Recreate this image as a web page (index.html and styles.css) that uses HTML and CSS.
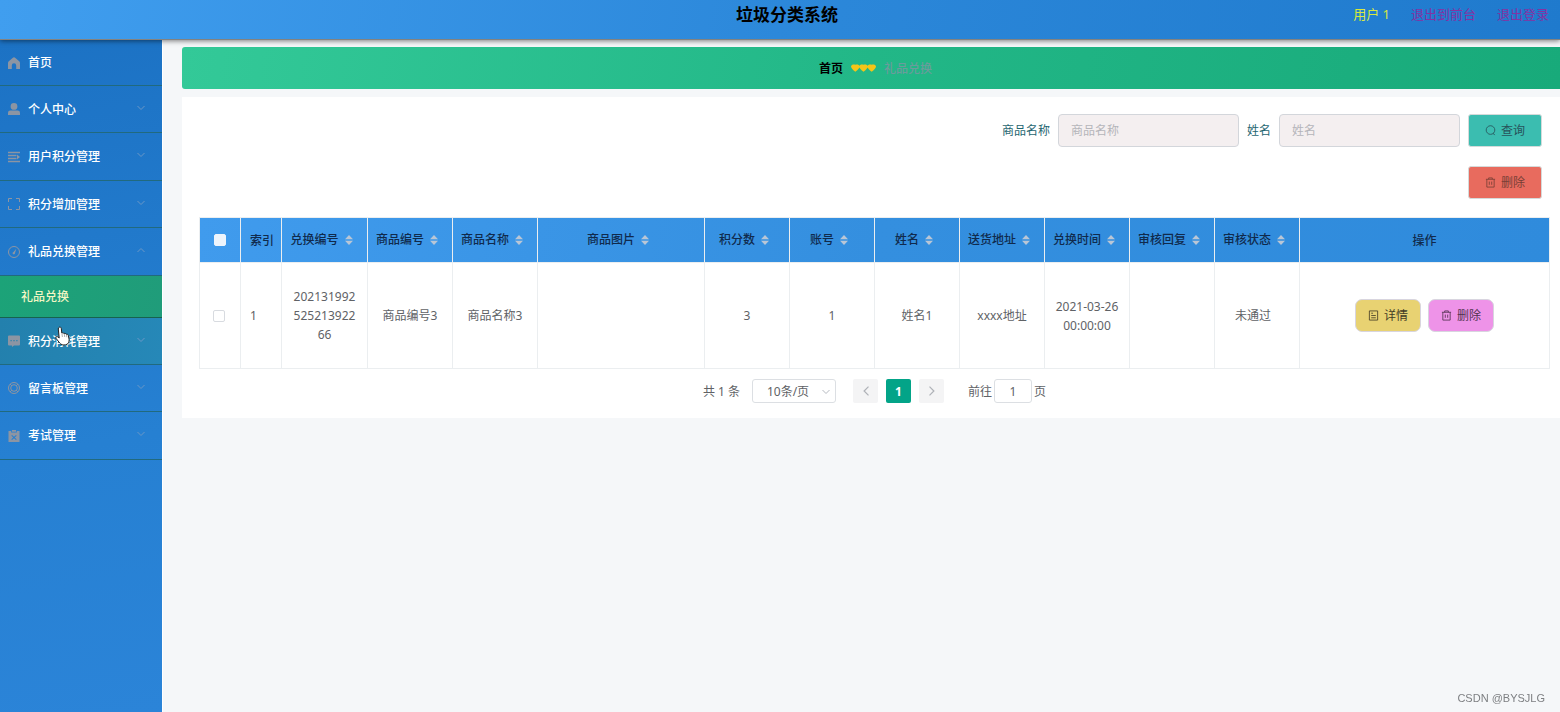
FILE: index.html
```html
<!DOCTYPE html>
<html lang="zh-CN">
<head>
<meta charset="utf-8">
<title>垃圾分类系统</title>
<link rel="stylesheet" href="styles.css">
</head>
<body>
<svg class="defs" aria-hidden="true">
  <symbol id="down" viewBox="0 0 8 8"><path d="M.5 2 4 5.500 7.500 2" fill="none" stroke="currentColor"/></symbol>
  <symbol id="sort" viewBox="0 0 8 10"><path d="M4 0 8 4.300H0zM4 10 0 5.700h8z" fill="currentColor"/></symbol>
  <symbol id="trash" viewBox="0 0 12 12"><path d="M1 2.500h10M4 2.500v-1.500h4v1.500M2 2.500v8.500h8V2.500M4.700 5v3.500M7.300 5v3.500" fill="none" stroke="currentColor" stroke-width=".9"/></symbol>
</svg>
<header class="topbar">
  <h1 class="title">垃圾分类系统</h1>
  <div class="user">
    <span class="user-name">用户 1</span>
    <a class="user-link" href="#front">退出到前台</a>
    <a class="user-link" href="#logout">退出登录</a>
  </div>
</header>
<div class="layout">
  <nav class="sidebar">
    <a class="item home" href="#home">
      <svg class="icon" viewBox="0 0 12 12"><path d="M6 .3Q5.300.3 4.600 1L.8 4.300Q0 5 0 6v6h3.800V8.500a2.200 2.200 0 0 1 4.400 0V12H12V6q0-1-.8-1.700L7.400 1Q6.700.3 6 .3z" fill="currentColor"/></svg><span>首页</span></a>
    <a class="item" href="#me">
      <svg class="icon" viewBox="0 0 12 12"><path d="M6 0a3.300 3.300 0 1 1 0 6.800A3.300 3.300 0 0 1 6 0zM0 12V9.800Q0 7.500 2.400 7.500h7.200Q12 7.500 12 9.800V12z" fill="currentColor"/></svg><span>个人中心</span><svg class="arrow"><use href="#down"/></svg></a>
    <a class="item" href="#points">
      <svg class="icon" viewBox="0 0 12 12"><path d="M0 1.500h12M0 4.500h8.500M0 7.500h8.500M0 10.500h12" stroke="currentColor" stroke-width="1.300"/><path d="M9 3.500 12 6 9 8.500z" fill="currentColor"/></svg><span>用户积分管理</span><svg class="arrow"><use href="#down"/></svg></a>
    <a class="item" href="#add">
      <svg class="icon" viewBox="0 0 12 12"><path d="M.5 4V.5H4M8 .5h3.500V4M11.500 8v3.500H8M4 11.500H.5V8" fill="none" stroke="currentColor"/></svg><span>积分增加管理</span><svg class="arrow"><use href="#down"/></svg></a>
    <a class="item" href="#gifts">
      <svg class="icon" viewBox="0 0 12 12"><circle cx="6" cy="6" r="5.500" fill="none" stroke="currentColor"/><path d="M8.300 2.800 7 7a1.200 1.200 0 1 1-1.500-1z" fill="currentColor"/></svg><span>礼品兑换管理</span><svg class="arrow up"><use href="#down"/></svg></a>
    <a class="subitem" href="#exchange">礼品兑换</a>
    <a class="item hovered" href="#spend">
      <svg class="icon" viewBox="0 0 12 12"><path d="M1 .5h10q1 0 1 1v8q0 1-1 1H6L4 12v-1.500H1q-1 0-1-1v-8q0-1 1-1zM2.500 5v1.200h1.200V5zm2.900 0v1.200h1.200V5zm2.900 0v1.200h1.200V5z" fill="currentColor" fill-rule="evenodd"/></svg><span>积分消耗管理</span><svg class="arrow"><use href="#down"/></svg></a>
    <a class="item" href="#board">
      <svg class="icon" viewBox="0 0 12 12" fill="none" stroke="currentColor"><circle cx="6" cy="6" r="5.500"/><circle cx="6" cy="6" r="3.300"/><path d="m2 2 1.800 1.800M10 2 8.200 3.800M2 10l1.800-1.800M10 10 8.200 8.200"/></svg><span>留言板管理</span><svg class="arrow"><use href="#down"/></svg></a>
    <a class="item" href="#exam">
      <svg class="icon" viewBox="0 0 12 12"><path d="M.5 1h2.700v1.500h5.600V1h2.700v11H.5zM4 0h4v1.700H4zM4 5l-.7.7L5.300 7.500l-2 1.800.7.700 2-1.800L8 10l.7-.7-2-1.800 2-1.800L8 5 6 6.800z" fill="currentColor" fill-rule="evenodd"/></svg><span>考试管理</span><svg class="arrow"><use href="#down"/></svg></a>
  </nav>
  <main class="main">
    <div class="crumbs">
      <a class="crumb-home" href="#home">首页</a>
      <svg class="hearts" viewBox="0 0 26 8"><path d="M4.500 8Q0 4.500 0 2.500C0 .3 3 0 4.500.5 6 0 9 .3 9 2.500Q9 4.500 4.500 8zM13 8Q8.500 4.500 8.500 2.500c0-2.200 3-2.500 4.500-2 1.500-.5 4.500-.2 4.500 2Q17.500 4.500 13 8zM21.500 8Q17 4.500 17 2.500c0-2.200 3-2.500 4.500-2 1.500-.5 4.500-.2 4.500 2Q26 4.500 21.500 8z" fill="#f5c518"/></svg>
      <span class="crumb-now">礼品兑换</span>
    </div>
    <section class="panel">
      <form class="search">
        <label for="goods">商品名称</label>
        <input class="field" id="goods" type="text" placeholder="商品名称">
        <label for="name">姓名</label>
        <input class="field" id="name" type="text" placeholder="姓名">
        <button class="btn query" type="button"><svg class="btn-icon" viewBox="0 0 12 12"><circle cx="6" cy="5.500" r="4.700" fill="none" stroke="currentColor" stroke-width=".9"/><path d="m9 9 1.500 2" stroke="currentColor"/></svg>查询</button>
      </form>
      <div class="tools">
        <button class="btn remove" type="button"><svg class="btn-icon"><use href="#trash"/></svg>删除</button>
      </div>
      <table class="grid">
        <colgroup><col class="c-check"><col class="c-index"><col class="c-code"><col class="c-std"><col class="c-std"><col class="c-photo"><col class="c-std"><col class="c-std"><col class="c-std"><col class="c-std"><col class="c-std"><col class="c-std"><col class="c-std"><col class="c-ops"></colgroup>
        <thead>
          <tr>
            <th><input class="check" type="checkbox" aria-label="全选"></th>
            <th class="left">索引</th>
            <th class="sortable">兑换编号<svg class="sort"><use href="#sort"/></svg></th>
            <th class="sortable">商品编号<svg class="sort"><use href="#sort"/></svg></th>
            <th class="sortable">商品名称<svg class="sort"><use href="#sort"/></svg></th>
            <th class="sortable">商品图片<svg class="sort"><use href="#sort"/></svg></th>
            <th class="sortable">积分数<svg class="sort"><use href="#sort"/></svg></th>
            <th class="sortable">账号<svg class="sort"><use href="#sort"/></svg></th>
            <th class="sortable">姓名<svg class="sort"><use href="#sort"/></svg></th>
            <th class="sortable">送货地址<svg class="sort"><use href="#sort"/></svg></th>
            <th class="sortable">兑换时间<svg class="sort"><use href="#sort"/></svg></th>
            <th class="sortable">审核回复<svg class="sort"><use href="#sort"/></svg></th>
            <th class="sortable">审核状态<svg class="sort"><use href="#sort"/></svg></th>
            <th>操作</th>
          </tr>
        </thead>
        <tbody>
          <tr>
            <td class="pick"><input class="check" type="checkbox" aria-label="选择第1行"></td>
            <td class="left">1</td>
            <td>20213199252521392266</td>
            <td>商品编号3</td>
            <td>商品名称3</td>
            <td></td>
            <td>3</td>
            <td>1</td>
            <td>姓名1</td>
            <td>xxxx地址</td>
            <td>2021-03-26 00:00:00</td>
            <td></td>
            <td class="status">未通过</td>
            <td>
              <div class="ops">
                <button class="btn small detail" type="button"><svg class="btn-icon" viewBox="0 0 12 12"><path d="M1.500 1h9v10h-9zM3.500 3.500h2M3.500 6h5M3.500 8.500h5" fill="none" stroke="currentColor" stroke-width=".9"/></svg>详情</button>
                <button class="btn small drop" type="button"><svg class="btn-icon"><use href="#trash"/></svg>删除</button>
              </div>
            </td>
          </tr>
        </tbody>
      </table>
      <div class="pager">
        <span>共 1 条</span>
        <span class="size"><select class="size-select" aria-label="每页条数"><option>10条/页</option></select><svg class="size-arrow"><use href="#down"/></svg></span>
        <div class="pages">
          <button class="page" type="button" aria-label="上一页" disabled><svg class="arrow-h prev"><use href="#down"/></svg></button>
          <button class="page current" type="button">1</button>
          <button class="page" type="button" aria-label="下一页" disabled><svg class="arrow-h next"><use href="#down"/></svg></button>
        </div>
        <label class="jump">前往<input class="jump-input" type="text" value="1">页</label>
      </div>
    </section>
  </main>
</div>
<svg class="pointer" viewBox="0 0 16 20" aria-hidden="true"><path d="M4.200 1.300c1-.6 2 .1 2.100 1.200l.5 4.600c.8-.5 1.800-.2 2.200.5.900-.5 1.900-.1 2.200.7 1-.4 2 .2 2.200 1.300l.7 3.700c.3 2.500-.8 5-3.500 5.500-2.500.5-4.600-.1-5.900-1.800L1 12.300c-.6-1.200.7-2.200 1.800-1.500l1.400 1.200L3.300 3c-.1-.8.2-1.400.9-1.700z" fill="#fff" stroke="#222"/><path d="m7 8 .4 3M9.300 8l.4 3M11.500 8.700l.3 2.500" stroke="#777" stroke-width=".6"/></svg>
<div class="watermark">CSDN @BYSJLG</div>
</body>
</html>
```
FILE: styles.css
```css
* { box-sizing: border-box; }

body {
  margin: 0;
  min-height: 100vh;
  display: flex;
  flex-direction: column;
  overflow-x: hidden;
  background: #f5f7f9;
  color: #606266;
  font: 12px/19px "Noto Sans", "Noto Sans CJK SC", sans-serif;
}

a { text-decoration: none; }
button, input, select { font: inherit; }
.defs { display: none; }

.topbar {
  position: relative;
  z-index: 2;
  display: grid;
  grid-template-columns: 1fr auto 1fr;
  height: 40px;
  padding: 0 11px 10px 25px;
  align-items: center;
  background: linear-gradient(100deg, #409eef, #2c88da 50%, #1f7acd);
  border-bottom: 1px solid #84827f;
  box-shadow: 0 1px 5px rgba(0, 0, 0, .5);
}
.title {
  grid-column: 2;
  margin: 0;
  color: #000;
  font-size: 17px;
  line-height: 24px;
}
.user {
  display: flex;
  justify-content: flex-end;
  gap: 21px;
  font-size: 13px;
}
.user-name { color: #d9e83f; }
.user-link { color: #8432a3; }

.layout { flex: 1; display: flex; }

.sidebar {
  flex: none;
  width: 162px;
  background: linear-gradient(170deg, #1c72c4, #2680d2 60%, #2b84d8);
}
.item {
  display: flex;
  align-items: center;
  gap: 8px;
  height: 48px;
  padding: 0 17px 0 8px;
  border-bottom: 1px solid #216a7e;
  color: #fff;
  font-weight: 500;
}
.item:nth-child(even) { height: 47px; }
.item.home { height: 46px; }
.icon { width: 12px; height: 12px; color: #8c95a3; }
.arrow {
  width: 8px;
  height: 8px;
  margin: 0 0 3px auto;
  color: #6a97c6;
}
.arrow.up { transform: rotate(180deg); }
.item.hovered { background: linear-gradient(100deg, #2380ad, #2688b8); height: 47px; }
.subitem {
  display: flex;
  align-items: center;
  height: 42px;
  padding-left: 21px;
  border-bottom: 1px solid #17624f;
  background: linear-gradient(100deg, #1ca378, #209c7a);
  color: #f3f6c4;
  font-weight: 500;
}

.main {
  flex: 1;
  min-width: 0;
  padding: 7px 0 0 19px;
  border-left: 1px solid #fff;
}
.crumbs {
  display: flex;
  justify-content: center;
  align-items: center;
  gap: 8px;
  height: 42px;
  padding-left: 9px;
  border-radius: 3px 0 0 3px;
  background: linear-gradient(100deg, #33c998, #22b787 50%, #18aa7a);
}
.crumb-home { color: #000; font-weight: 700; }
.crumb-now { color: #6a9c9c; font-weight: 500; }
.hearts { width: 25px; height: 8px; }

.panel {
  margin-top: 8px;
  padding: 17px 10px 15px 17px;
  background: #fff;
}
.search, .tools {
  display: flex;
  justify-content: flex-end;
  align-items: center;
  gap: 9px;
  padding-right: 8px;
  color: #1f6671;
}
.search { gap: 8px; }
.tools { margin: 19px 0 18px; }
.field {
  width: 181px;
  height: 33px;
  padding: 0 12px;
  border: 1px solid #d3d6db;
  border-radius: 4px;
  background: #f4eff0;
  color: #606266;
}
.field::placeholder { color: #b5b5ba; }

.btn {
  display: flex;
  align-items: center;
  justify-content: center;
  gap: 5px;
  width: 74px;
  height: 33px;
  padding: 0;
  border: 1px solid #d5dada;
  border-radius: 3px;
}
.btn-icon { width: 11px; height: 11px; }
.query { background: #3bbdb0; color: #28525a; }
.remove { background: #e86b5e; color: #783f36; }
.small { width: 66px; border-radius: 7px; border-color: #d8d5df; }
.detail { background: #e8d272; color: #443d26; }
.drop { background: #ee93e8; color: #51334f; }
.ops { display: flex; justify-content: center; gap: 7px; }

.grid {
  width: 100%;
  table-layout: fixed;
  border-collapse: collapse;
  border: 1px solid #ebeef0;
}
.c-check, .c-index { width: 41px; }
.c-code { width: 86px; }
.c-std { width: 85px; }
.c-photo { width: 167px; }
.grid thead { background: linear-gradient(100deg, #409bed, #348fdf 50%, #2f8bdc); }
.grid th, .grid td {
  padding: 0 9px;
  border: 1px solid #ebeef0;
  text-align: center;
  overflow-wrap: anywhere;
}
.grid th {
  height: 45px;
  padding: 0;
  color: #102a4c;
  font-weight: 500;
  white-space: nowrap;
}
.grid .sortable { padding: 0 6px 2px 0; }
.grid td { height: 106px; }
.grid .pick { padding: 0 11px 0 8px; }
.grid .status { padding-right: 17px; }
.grid .left { padding-left: 9px; text-align: left; }
.sort {
  width: 8px;
  height: 10px;
  margin-left: 6px;
  vertical-align: -1px;
  color: #b9c6d6;
}
.check {
  appearance: none;
  display: block;
  width: 12px;
  height: 12px;
  margin: 0 auto;
  border: 1px solid #d8dbe0;
  border-radius: 2px;
  background: #fff;
}
th .check { background: #edf4fc; border-color: #edf4fc; }

.pager {
  display: flex;
  justify-content: center;
  align-items: center;
  margin-top: 10px;
  gap: 12px;
}
.size { position: relative; display: flex; }
.size-select {
  appearance: none;
  width: 84px;
  height: 24px;
  padding: 0 12px 0 0;
  border: 1px solid #dcdfe3;
  border-radius: 3px;
  background: #fff;
  color: #606266;
  text-align: center;
  text-align-last: center;
}
.size-arrow {
  position: absolute;
  right: 6px;
  top: 9px;
  width: 8px;
  height: 8px;
  color: #b5b9c0;
}
.pages { display: flex; gap: 8px; margin: 0 12px 0 5px; }
.page {
  display: flex;
  align-items: center;
  justify-content: center;
  width: 25px;
  height: 24px;
  padding: 0;
  border: 0;
  border-radius: 2px;
  background: #f4f4f5;
  color: #b0b3b9;
}
.page.current { background: #03a488; color: #fff; font-weight: 700; }
.arrow-h { width: 10px; height: 10px; }
.prev { transform: rotate(90deg); }
.next { transform: rotate(-90deg); }
.jump { display: flex; align-items: center; gap: 2px; }
.jump-input {
  width: 38px;
  height: 24px;
  padding: 0;
  border: 1px solid #dcdfe3;
  border-radius: 3px;
  color: #606266;
  text-align: center;
}

.pointer {
  position: absolute;
  z-index: 3;
  left: 55px;
  top: 326px;
  width: 16px;
  height: 20px;
}
.watermark {
  position: fixed;
  right: 15px;
  bottom: 5px;
  color: #7d7f82;
  font: 11px/18px "Liberation Sans", sans-serif;
}
```
